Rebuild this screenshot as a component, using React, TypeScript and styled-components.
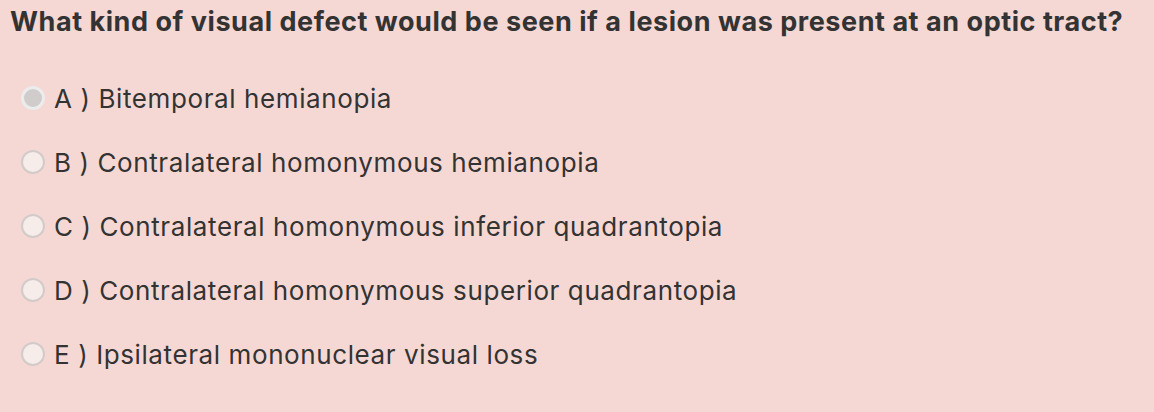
import React from "react";
import styled, { createGlobalStyle } from "styled-components";

const Global = createGlobalStyle`
  html, body { margin: 0; padding: 0; background: #f5d8d3; }
  body { font-family: Inter, "Noto Sans", sans-serif; color: #333333; }
`;

const Page = styled.div`
  width: 1154px;
  height: 412px;
  background: #f5d8d3;
  box-sizing: border-box;
  padding: 6px 0 0 10px;
`;

const Title = styled.h1`
  margin: 0;
  font-size: 27px;
  line-height: 32px;
  font-weight: 700;
  letter-spacing: 0.55px;
  color: #333333;
  white-space: nowrap;
`;

const List = styled.div`
  display: flex;
  flex-direction: column;
  gap: 32px;
  margin-top: 44px;
`;

const Row = styled.label`
  display: flex;
  align-items: center;
  gap: 9px;
  height: 32px;
  padding-left: 11px;
`;

const Radio = styled.span<{ $checked?: boolean }>`
  width: 24px;
  height: 24px;
  box-sizing: border-box;
  border-radius: 50%;
  flex: none;
  border: ${(p) => (p.$checked ? "3px solid #ececec" : "2px solid #d2cbca")};
  background: ${(p) => (p.$checked ? "#cfcccb" : "#f6ecea")};
`;

const Text = styled.span`
  font-size: 26px;
  font-weight: 400;
  letter-spacing: 0.6px;
  color: #333333;
  white-space: nowrap;
`;

const options = [
  "A ) Bitemporal hemianopia",
  "B ) Contralateral homonymous hemianopia",
  "C ) Contralateral homonymous inferior quadrantopia",
  "D ) Contralateral homonymous superior quadrantopia",
  "E ) Ipsilateral mononuclear visual loss",
];

export default function App() {
  return (
    <>
      <Global />
      <Page>
        <Title>What kind of visual defect would be seen if a lesion was present at an optic tract?</Title>
        <List>
          {options.map((o, i) => (
            <Row key={o}>
              <Radio $checked={i === 0} />
              <Text>{o}</Text>
            </Row>
          ))}
        </List>
      </Page>
    </>
  );
}
